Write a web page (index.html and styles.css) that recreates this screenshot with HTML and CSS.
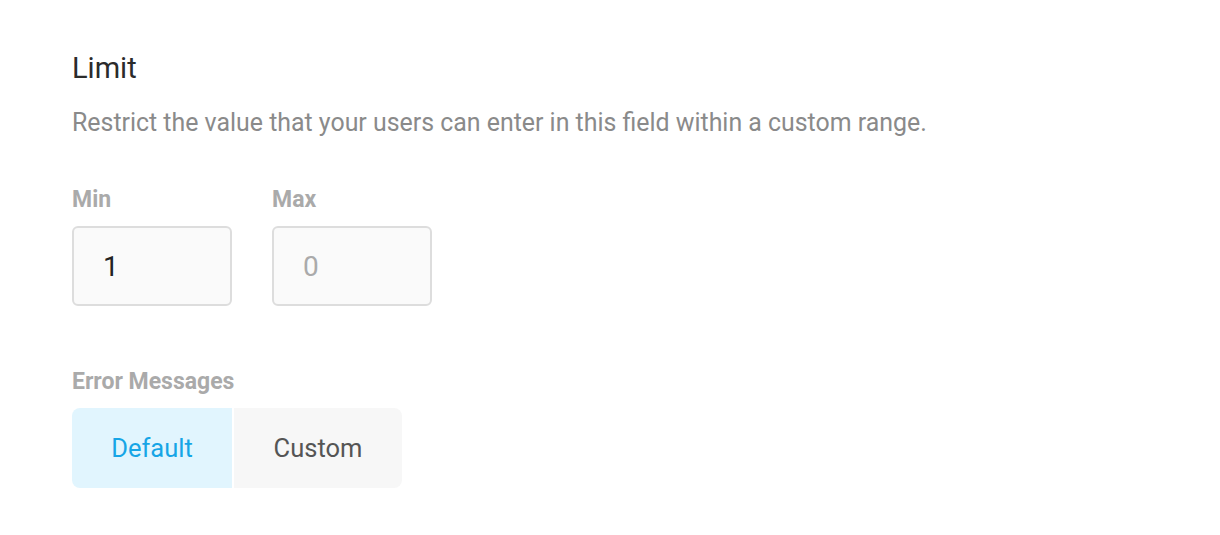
FILE: index.html
```html
<!DOCTYPE html>
<html lang="en">
<head>
<meta charset="utf-8">
<title>Limit</title>
<link rel="stylesheet" href="styles.css">
</head>
<body>
<section class="panel">
  <h2 class="title">Limit</h2>
  <p class="desc">Restrict the value that your users can enter in this field within a custom range.</p>
  <div class="range">
    <div class="field">
      <label class="label" for="min">Min</label>
      <input class="input" id="min" type="text" value="1">
    </div>
    <div class="field">
      <label class="label" for="max">Max</label>
      <input class="input" id="max" type="text" placeholder="0">
    </div>
  </div>
  <div class="errors">
    <div class="label">Error Messages</div>
    <div class="toggle">
      <button class="opt opt-active" type="button">Default</button>
      <button class="opt" type="button">Custom</button>
    </div>
  </div>
</section>
</body>
</html>
```
FILE: styles.css
```css
* { box-sizing: border-box; }
html, body { margin: 0; padding: 0; background: #fff; }
body { font-family: Roboto, "Noto Sans", sans-serif; }
.panel { padding: 50px 72px; }
.title {
  margin: 0;
  font-size: 29px;
  font-weight: 400;
  color: #2b2b2b;
  line-height: 36px;
}
.desc {
  margin: 21px 0 0;
  font-size: 24.9px;
  line-height: 32px;
  color: #8a8a8a;
}
.range { display: flex; gap: 40px; margin-top: 46px; }
.field { display: flex; flex-direction: column; }
.label {
  font-size: 23px;
  font-weight: 700;
  color: #aaa;
  line-height: 30px;
}
.input {
  margin-top: 11px;
  width: 160px;
  height: 80px;
  border: 2px solid #ddd;
  border-radius: 6px;
  background: #fafafa;
  font-family: inherit;
  font-size: 28px;
  color: #222;
  padding: 0 0 0 29px;
  outline: none;
}
.input::placeholder { color: #aaa; }
.errors { margin-top: 61px; display: flex; flex-direction: column; }
.toggle { display: flex; gap: 2px; margin-top: 11px; }
.opt {
  height: 80px;
  border: none;
  font-family: inherit;
  font-size: 25.5px;
  font-weight: 400;
  background: #f7f7f7;
  color: #555;
  padding: 0;
  width: 168px;
  border-radius: 0 8px 8px 0;
}
.opt-active {
  width: 160px;
  background: #e1f5fe;
  color: #16a5e6;
  border-radius: 8px 0 0 8px;
}
```
